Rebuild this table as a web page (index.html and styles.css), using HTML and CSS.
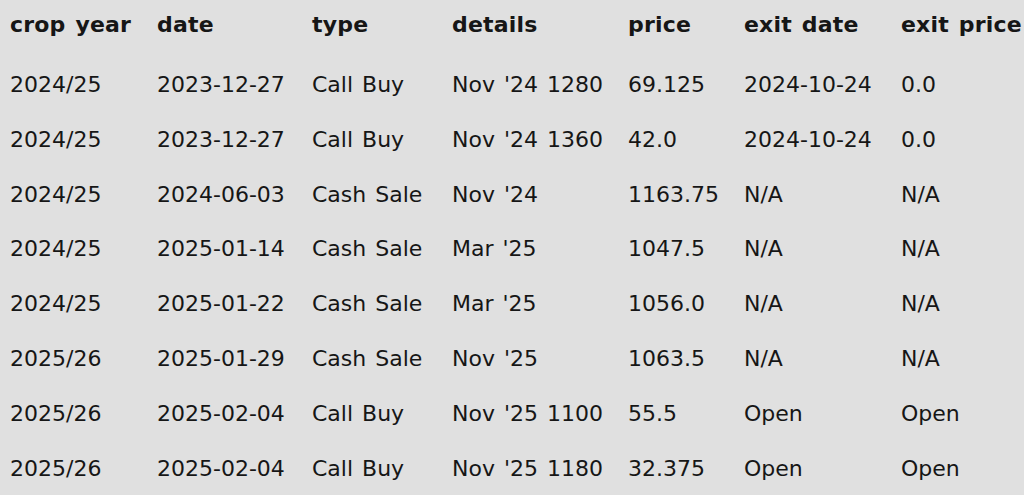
FILE: index.html
```html
<!DOCTYPE html>
<html>
<head>
<meta charset="utf-8">
<link rel="stylesheet" href="styles.css">
</head>
<body>
<table class="trades">
  <colgroup>
    <col class="c1"><col class="c2"><col class="c3"><col class="c4"><col class="c5"><col class="c6"><col class="c7">
  </colgroup>
  <thead>
    <tr><th>crop year</th><th>date</th><th>type</th><th>details</th><th>price</th><th>exit date</th><th>exit price</th></tr>
  </thead>
  <tbody>
    <tr><td>2024/25</td><td>2023-12-27</td><td>Call Buy</td><td>Nov '24 1280</td><td>69.125</td><td>2024-10-24</td><td>0.0</td></tr>
    <tr><td>2024/25</td><td>2023-12-27</td><td>Call Buy</td><td>Nov '24 1360</td><td>42.0</td><td>2024-10-24</td><td>0.0</td></tr>
    <tr><td>2024/25</td><td>2024-06-03</td><td>Cash Sale</td><td>Nov '24</td><td>1163.75</td><td>N/A</td><td>N/A</td></tr>
    <tr><td>2024/25</td><td>2025-01-14</td><td>Cash Sale</td><td>Mar '25</td><td>1047.5</td><td>N/A</td><td>N/A</td></tr>
    <tr><td>2024/25</td><td>2025-01-22</td><td>Cash Sale</td><td>Mar '25</td><td>1056.0</td><td>N/A</td><td>N/A</td></tr>
    <tr><td>2025/26</td><td>2025-01-29</td><td>Cash Sale</td><td>Nov '25</td><td>1063.5</td><td>N/A</td><td>N/A</td></tr>
    <tr><td>2025/26</td><td>2025-02-04</td><td>Call Buy</td><td>Nov '25 1100</td><td>55.5</td><td>Open</td><td>Open</td></tr>
    <tr><td>2025/26</td><td>2025-02-04</td><td>Call Buy</td><td>Nov '25 1180</td><td>32.375</td><td>Open</td><td>Open</td></tr>
  </tbody>
</table>
</body>
</html>
```
FILE: styles.css
```css
html, body {
  margin: 0;
  padding: 0;
  background: #e0e0e0;
  overflow: hidden;
}
body {
  font-family: "DejaVu Sans", sans-serif;
  font-size: 22px;
  color: #161616;
}
.trades {
  border-collapse: collapse;
  table-layout: fixed;
  margin-left: 10px;
  width: 1014px;
  white-space: nowrap;
}
.c1 { width: 147px; }
.c2 { width: 155px; }
.c3 { width: 140px; }
.c4 { width: 176px; }
.c5 { width: 116px; }
.c6 { width: 157px; }
.c7 { width: 123px; }
.trades th, .trades td {
  padding: 0;
  text-align: left;
  vertical-align: middle;
}
.trades th {
  font-weight: bold;
  height: 48px;
  letter-spacing: 0.2px;
  word-spacing: 2px;
}
.trades thead tr {
  border-bottom: 9.6px solid transparent;
}
.trades td {
  height: 54.857px;
  word-spacing: 2px;
}
```
